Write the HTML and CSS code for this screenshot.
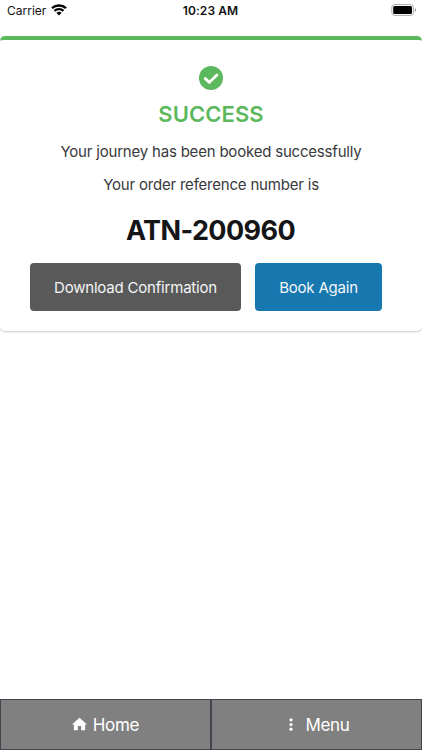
FILE: index.html
```html
<!DOCTYPE html>
<html lang="en">

<head>
    <meta charset="utf-8">
    <meta name="viewport" content="width=device-width, initial-scale=1">
    <title>Booking Success</title>
    <link rel="stylesheet" href="styles.css">
</head>

<body>
    <header class="status-bar">
        <div class="carrier">
            <span>Carrier</span>
            <svg class="wifi" viewBox="0 0 16 12">
                <path d="M1 4.2C5 .5 11 .5 15 4.2" />
                <path d="M3.5 6.8C6 4.5 10 4.5 12.5 6.8" />
                <path class="wifi-dot" d="M5.4 8.8C7 7.5 9 7.5 10.6 8.8L8 11.5z" />
            </svg>
        </div>
        <div class="time">10:23 AM</div>
        <div class="battery">
            <svg viewBox="0 0 26 12" width="26" height="12">
                <rect class="battery-case" x=".8" y=".6" width="21.6" height="10.8" rx="2.8" />
                <rect x="2.2" y="2" width="18.8" height="8" rx="1.5" />
                <path class="battery-cap" d="M23.8 4v4q1.3-.6 1.3-2t-1.3-2z" />
            </svg>
        </div>
    </header>

    <main class="card">
        <svg class="check" viewBox="0 0 24 24">
            <circle cx="12" cy="12" r="12" />
            <path d="M6.2 12.6l4.1 3.8 7.6-7.5" />
        </svg>
        <h1>SUCCESS</h1>
        <p class="message">Your journey has been booked successfully</p>
        <p class="label">Your order reference number is</p>
        <h2>ATN-200960</h2>
        <div class="buttons">
            <button class="btn btn-download">Download Confirmation</button>
            <button class="btn btn-book">Book Again</button>
        </div>
    </main>

    <nav class="bottom-nav">
        <a class="nav-item nav-home">
            <svg class="home-icon" viewBox="0 0 16 14">
                <path d="M8 .3L16 7.5h-2V13q0 .7-.7.7H9.8V9H6.2v4.7H2.7q-.7 0-.7-.7V7.5H0z" />
            </svg>
            <span>Home</span>
        </a>
        <a class="nav-item nav-menu">
            <svg class="dots-icon" viewBox="0 0 4 14">
                <circle cx="2" cy="2" r="1.7" />
                <circle cx="2" cy="7" r="1.7" />
                <circle cx="2" cy="12" r="1.7" />
            </svg>
            <span>Menu</span>
        </a>
    </nav>
</body>

</html>
```
FILE: styles.css
```css
* {
    box-sizing: border-box;
}

body {
    margin: 0;
    height: 100vh;
    display: flex;
    flex-direction: column;
    background: #fff;
    color: #39393b;
    font-family: Inter, "Liberation Sans", sans-serif;
    overflow: hidden;
}

/* status bar */
.status-bar {
    height: 36px;
    padding: 0 6px 0 7px;
    display: grid;
    grid-template-columns: 1fr auto 1fr;
    align-items: start;
    color: #111;
    font-size: 12px;
    line-height: 22px;
}

.carrier {
    display: flex;
    gap: 5px;
    font-size: 12px;
}

.wifi {
    width: 16px;
    height: 12px;
    margin-top: 4px;
    fill: none;
    stroke: #000;
    stroke-width: 2.4;
}

.wifi-dot {
    fill: #000;
    stroke: none;
}

.time {
    font-weight: 600;
    letter-spacing: .1px;
    margin-right: 2px;
}

.battery {
    display: flex;
    justify-content: flex-end;
    padding-top: 4px;
    margin-right: -1px;
}

.battery-case {
    fill: none;
    stroke: #aaa;
}

.battery-cap {
    fill: #999;
}

/* booking card */
.card {
    height: 295px;
    padding-top: 26px;
    border-top: 4px solid #5cb85c;
    border-radius: 5px;
    box-shadow: 0 1px 2px rgba(0, 0, 0, .22);
    display: flex;
    flex-direction: column;
    align-items: center;
    white-space: nowrap;
}

.check {
    width: 24px;
    height: 24px;
    fill: #5cb85c;
    flex-shrink: 0;
}

.check path {
    fill: none;
    stroke: #fff;
    stroke-width: 2.8;
    stroke-linecap: round;
}

h1,
h2,
p {
    margin: 0;
}

h1 {
    margin-top: 9px;
    color: #5cb85c;
    font-size: 22px;
    font-weight: 600;
    line-height: 30px;
    letter-spacing: .1px;
}

.message,
.label {
    font-size: 15px;
    line-height: 22px;
    letter-spacing: -.2px;
}

.message {
    margin-top: 12px;
}

.label {
    margin-top: 11px;
}

h2 {
    margin-top: 17px;
    margin-right: 1px;
    color: #151517;
    font-size: 27px;
    font-weight: 700;
    line-height: 36px;
    letter-spacing: -.6px;
}

.buttons {
    width: 352px;
    margin: 14px 10px 0 0;
    display: flex;
    gap: 14px;
}

.btn {
    height: 47.5px;
    padding: 1px 0 0;
    border: 0;
    border-radius: 4px;
    color: #f3f5f6;
    font: 15px Inter, "Liberation Sans", sans-serif;
    letter-spacing: -.2px;
}

.btn-download {
    width: 211px;
    background: #595959;
}

.btn-book {
    width: 127px;
    background: #1778b0;
}

/* bottom navigation */
.bottom-nav {
    height: 51px;
    margin-top: auto;
    padding: 1px;
    display: grid;
    grid-template-columns: 1fr 1fr;
    gap: 2px;
    background: #44434d;
}

.nav-item {
    display: flex;
    align-items: center;
    justify-content: center;
    background: #808080;
    color: #fff;
    font-size: 17px;
    letter-spacing: -.3px;
}

.nav-item svg {
    fill: #fff;
}

.nav-item span {
    line-height: 22px;
    padding-top: 1px;
}

.home-icon {
    width: 15px;
    height: 14px;
    margin: 0 6px 1px 0;
}

.nav-menu {
    padding-left: 6px;
}

.dots-icon {
    width: 4px;
    height: 13px;
    margin: 0 12px 1px 0;
}
```
